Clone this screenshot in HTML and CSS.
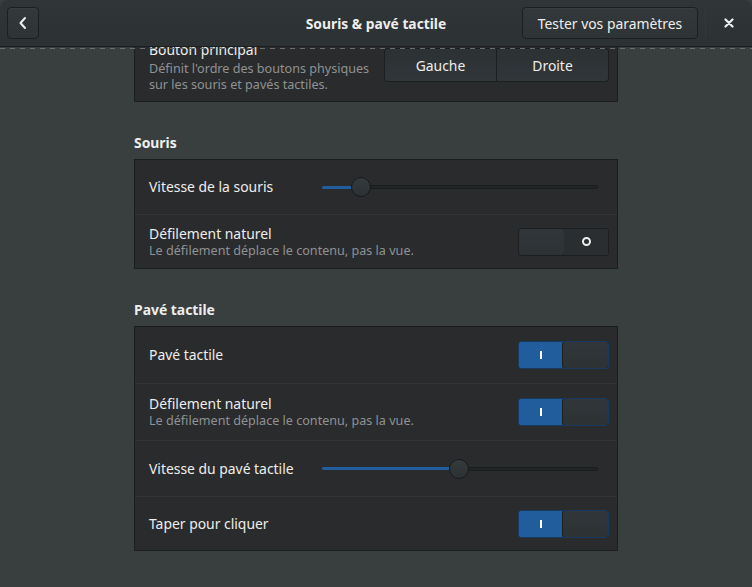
FILE: index.html
```html
<!DOCTYPE html>
<html lang="fr">
<head>
<meta charset="utf-8">
<title>Souris &amp; pavé tactile</title>
<link rel="stylesheet" href="styles.css">
</head>
<body>
<div class="window">
  <header class="headerbar">
    <div class="hb-start">
      <button class="btn icon-btn" aria-label="Retour">
        <svg width="16" height="16" viewBox="0 0 16 16"><path d="M10 3 L5.5 8 L10 13" fill="none" stroke="#eeeeec" stroke-width="2" stroke-linecap="round" stroke-linejoin="round"/></svg>
      </button>
    </div>
    <div class="hb-title">Souris &amp; pavé tactile</div>
    <div class="hb-end">
      <button class="btn test-btn">Tester vos paramètres</button>
      <span class="hb-sep"></span>
      <button class="close-btn" aria-label="Fermer">
        <svg width="10" height="10" viewBox="0 0 10 10"><path d="M1.5 1.5 L8.5 8.5 M8.5 1.5 L1.5 8.5" stroke="#eeeeec" stroke-width="2.2" stroke-linecap="round"/></svg>
      </button>
    </div>
  </header>
  <main class="scroller">
    <div class="undershoot"></div>
    <div class="content">
      <section class="card first-card">
        <div class="row row-3">
          <div class="labels">
            <div class="title">Bouton principal</div>
            <div class="desc desc-gap">Définit l'ordre des boutons physiques<br>sur les souris et pavés tactiles.</div>
          </div>
          <div class="linked">
            <button class="lbtn">Gauche</button>
            <button class="lbtn">Droite</button>
          </div>
        </div>
      </section>

      <h2 class="heading">Souris</h2>
      <section class="card">
        <div class="row">
          <div class="title">Vitesse de la souris</div>
          <div class="slider"><div class="fill" style="width:30px"></div><div class="knob"></div><div class="rest"></div></div>
        </div>
        <div class="row h54">
          <div class="labels">
            <div class="title">Défilement naturel</div>
            <div class="desc">Le défilement déplace le contenu, pas la vue.</div>
          </div>
          <div class="switch off"><span class="knobpart"></span><span class="side"><span class="ring"></span></span></div>
        </div>
      </section>

      <h2 class="heading">Pavé tactile</h2>
      <section class="card">
        <div class="row h56">
          <div class="title">Pavé tactile</div>
          <div class="switch on"><span class="side"><span class="bar"></span></span><span class="knobpart"></span></div>
        </div>
        <div class="row h57">
          <div class="labels">
            <div class="title">Défilement naturel</div>
            <div class="desc">Le défilement déplace le contenu, pas la vue.</div>
          </div>
          <div class="switch on"><span class="side"><span class="bar"></span></span><span class="knobpart"></span></div>
        </div>
        <div class="row h56">
          <div class="title">Vitesse du pavé tactile</div>
          <div class="slider"><div class="fill" style="width:128px"></div><div class="knob"></div><div class="rest"></div></div>
        </div>
        <div class="row h54">
          <div class="title">Taper pour cliquer</div>
          <div class="switch on"><span class="side"><span class="bar"></span></span><span class="knobpart"></span></div>
        </div>
      </section>
    </div>
  </main>
</div>
</body>
</html>
```
FILE: styles.css
```css
* { box-sizing: border-box; }
html, body { margin: 0; padding: 0; }
body {
  width: 752px;
  height: 587px;
  overflow: hidden;
  background: #393f3f;
  font-family: "Noto Sans", "DejaVu Sans", sans-serif;
  font-size: 13.9px;
  color: #eeeeec;
}
.window {
  width: 752px;
  height: 587px;
  display: flex;
  flex-direction: column;
  background: #393f3f;
}
.headerbar {
  height: 47px;
  flex: none;
  display: grid;
  grid-template-columns: 1fr auto 1fr;
  align-items: center;
  padding: 0 7px;
  background: linear-gradient(#303638, #2c3133);
  border-bottom: 1px solid #1b1f20;
  border-radius: 7px 7px 0 0;
}
.hb-start { display: flex; }
.hb-title {
  font-weight: bold;
  font-size: 13.8px;
  text-align: center;
}
.hb-end {
  display: flex;
  justify-content: flex-end;
  align-items: center;
}
.btn {
  height: 32px;
  background: linear-gradient(#33393b, #2e3436);
  border: 1px solid #1b1f20;
  border-radius: 4px;
  color: #eeeeec;
  font-family: inherit;
  font-size: 13.9px;
  padding: 0;
  box-shadow: inset 0 1px rgba(255,255,255,0.03);
}
.icon-btn {
  width: 32px;
  display: flex;
  align-items: center;
  justify-content: center;
}
.test-btn {
  width: 176px;
}
.hb-sep {
  width: 1px;
  height: 32px;
  margin: 0 7px 0 7px;
  background: #33393b;
}
.close-btn {
  width: 32px;
  height: 32px;
  background: none;
  border: none;
  padding: 0;
  display: flex;
  align-items: center;
  justify-content: center;
}
.scroller {
  flex: 1;
  position: relative;
  overflow: hidden;
}
.undershoot {
  position: absolute;
  left: 0;
  right: 0;
  top: 1px;
  height: 1px;
  background: repeating-linear-gradient(90deg, #6a7070 0 5px, transparent 5px 10px);
  z-index: 2;
}
.content {
  width: 484px;
  margin: -18px auto 0;
}
.card {
  background: #2a2b2d;
  border: 1px solid #1b1e1f;
}
.row {
  min-height: 55px;
  display: flex;
  align-items: center;
  justify-content: space-between;
  padding: 0 8px 0 14px;
  border-top: 1px solid #313335;
}
.row:first-child { border-top: none; min-height: 54px; }
.row.h54 { min-height: 54px; }
.row.h56 { min-height: 56px; }
.row.h57 { min-height: 57px; }
.row-3 { min-height: 71px; }
.row.row-3:first-child { min-height: 71px; }
.labels { display: flex; flex-direction: column; }
.title { line-height: 18px; }
.desc {
  line-height: 16px;
  font-size: 12.6px;
  color: #8f9293;
}
.desc-gap { margin-top: 2px; margin-bottom: -2px; }
.linked {
  display: flex;
  height: 34px;
  align-self: flex-start;
  margin-top: 18px;
}
.lbtn {
  width: 113px;
  height: 34px;
  background: linear-gradient(#2c3133, #30363a);
  border: 1px solid #1b1f20;
  color: #eeeeec;
  font-family: inherit;
  font-size: 13.9px;
  padding: 0;
}
.lbtn:first-child { border-radius: 4px 0 0 4px; width: 113px; }
.lbtn:last-child { border-radius: 0 4px 4px 0; border-left: none; width: 112px; }
.heading {
  margin: 32px 0 7px 0;
  font-size: 13.9px;
  font-weight: bold;
  line-height: 18px;
}
.slider {
  width: 276px;
  margin-right: 11px;
  display: flex;
  align-items: center;
  height: 20px;
}
.fill {
  height: 3px;
  background: #215d9c;
  border-radius: 2px 0 0 2px;
  margin-right: -1px;
}
.knob {
  width: 20px;
  height: 20px;
  border-radius: 50%;
  background: linear-gradient(#353b3d, #2c3133);
  border: 1px solid #15191a;
  flex: none;
  position: relative;
  z-index: 1;
}
.rest {
  flex: 1;
  height: 4px;
  background: #222526;
  border: 1px solid #1b1e1f;
  border-radius: 0 2px 2px 0;
  margin-left: -1px;
}
.switch {
  width: 91px;
  height: 28px;
  display: flex;
  border: 1px solid #1b1f20;
  border-radius: 3px;
  overflow: hidden;
  flex: none;
}
.switch .side {
  width: 45px;
  display: flex;
  align-items: center;
  justify-content: center;
}
.switch .knobpart {
  width: 46px;
  background: linear-gradient(#30363a, #2d3234);
  border: 1px solid #1b1f20;
  margin: -1px;
  border-radius: 3px;
}
.switch.off .side { background: #2a2e30; flex: 1; }
.switch.off .knobpart { width: 47px; }
.switch.on { border-color: #183a5e; }
.switch.on .side { background: #215d9c; flex: 1; }
.switch.on .knobpart { width: 47px; }
.bar {
  width: 2px;
  height: 8px;
  background: #ffffff;
}
.ring {
  width: 9px;
  height: 9px;
  border: 2px solid #eeeeec;
  border-radius: 50%;
}
```
